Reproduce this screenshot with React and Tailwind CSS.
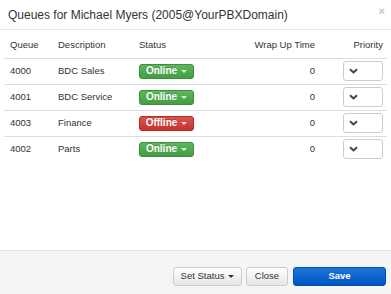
import React from 'react';

const rows = [
  { queue: '4000', desc: 'BDC Sales', online: true },
  { queue: '4001', desc: 'BDC Service', online: true },
  { queue: '4003', desc: 'Finance', online: false },
  { queue: '4002', desc: 'Parts', online: true },
];

function Caret({ className }) {
  return <span className={`inline-block w-0 h-0 border-x-[3px] border-x-transparent border-t-[3px] ml-[4px] align-middle ${className}`} />;
}

function StatusButton({ online }) {
  const tone = online
    ? 'from-[#5cb85c] to-[#449d44] border-[#3e8f3e]'
    : 'from-[#d9534f] to-[#c9302c] border-[#b92c28]';
  return (
    <button className={`w-[55px] h-[15px] flex items-center justify-center rounded-[3px] border bg-linear-to-b ${tone} text-white font-bold text-[10px] leading-none [text-shadow:0_-1px_0_rgba(0,0,0,0.2)]`}>
      {online ? 'Online' : 'Offline'}
      <Caret className="border-t-white/80" />
    </button>
  );
}

function PrioritySelect() {
  return (
    <div className="ml-auto w-[40px] h-[20px] border border-[#ccc] rounded-[3px] bg-white flex items-center pl-[5px]">
      <svg width="9" height="6" viewBox="0 0 9 6">
        <path d="M1 1.2 L4.5 4.4 L8 1.2" fill="none" stroke="#444" strokeWidth="2" />
      </svg>
    </div>
  );
}

function App() {
  return (
    <div className="w-[391px] h-[294px] bg-white flex flex-col text-[#333] font-['Liberation_Sans',Arial,sans-serif] overflow-hidden">
      <div className="h-[30px] border-b border-[#e5e5e5] flex items-center justify-between pl-[8px] pr-[6px] shrink-0">
        <h4 className="text-[12px] leading-none pt-[1px]">Queues for Michael Myers (2005@YourPBXDomain)</h4>
        <span className="text-[#c4c4c4] text-[11px] leading-none font-bold -mt-[6px]">×</span>
      </div>
      <div className="flex-1 pt-[7px] px-[4px]">
        <table className="w-full table-fixed border-collapse text-[9.5px]">
          <thead>
            <tr className="h-[21px] border-b border-[#ddd]">
              <th className="w-[48px] font-normal text-left px-[6px] pb-[4px]">Queue</th>
              <th className="w-[81px] font-normal text-left px-[6px] pb-[4px]">Description</th>
              <th className="w-[80px] font-normal text-left px-[6px] pb-[4px]">Status</th>
              <th className="font-normal text-right px-[6px] pb-[4px]">Wrap Up Time</th>
              <th className="w-[66px] font-normal text-right pl-[6px] pr-[4px] pb-[4px]">Priority</th>
            </tr>
          </thead>
          <tbody>
            {rows.map((r) => (
              <tr key={r.queue} className="h-[26px] border-b border-[#ddd] last:border-b-0">
                <td className="px-[6px]">{r.queue}</td>
                <td className="px-[6px]">{r.desc}</td>
                <td className="px-[6px]"><StatusButton online={r.online} /></td>
                <td className="px-[6px] text-right">0</td>
                <td className="pl-[6px] pr-[4px]"><PrioritySelect /></td>
              </tr>
            ))}
          </tbody>
        </table>
      </div>
      <div className="h-[44px] shrink-0 bg-[#f5f5f5] border-t border-[#e5e5e5] flex justify-end items-start pt-[16px] pr-[5px] gap-[4px] text-[9.5px]">
        <button className="w-[69px] h-[19px] flex items-center justify-center rounded-[3px] border border-[#ccc] bg-linear-to-b from-white to-[#e6e6e6]">
          Set Status
          <Caret className="border-t-[#333]" />
        </button>
        <button className="w-[42px] h-[19px] flex items-center justify-center rounded-[3px] border border-[#ccc] bg-linear-to-b from-white to-[#e6e6e6]">
          Close
        </button>
        <button className="ml-[1px] w-[93px] h-[19px] flex items-center justify-center rounded-[3px] border border-[#0050b3] bg-linear-to-b from-[#1b74dc] to-[#0057c2] text-white font-bold">
          Save
        </button>
      </div>
    </div>
  );
}

export default App;
